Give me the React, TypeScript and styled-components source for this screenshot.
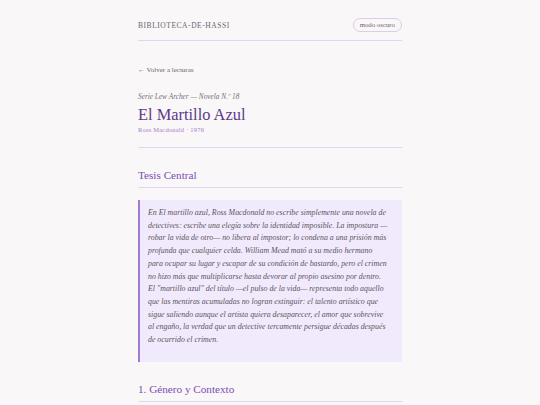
import styled, { createGlobalStyle } from "styled-components";

const GlobalStyle = createGlobalStyle`
  html, body {
    margin: 0;
    padding: 0;
    background: #f9f7f7;
  }
  body {
    font-family: "Liberation Serif", "DejaVu Serif", serif;
    color: #444;
  }
`;

const Page = styled.div`
  width: 264px;
  margin: 0 auto;
`;

const Header = styled.header`
  display: flex;
  justify-content: space-between;
  align-items: center;
  padding: 18px 0 8px;
  border-bottom: 1px solid #e3d5ef;
`;

const Brand = styled.div`
  font-size: 7.5px;
  letter-spacing: 0.55px;
  color: #6a6470;
`;

const ThemeButton = styled.button`
  font-family: inherit;
  font-size: 6.8px;
  color: #6a6470;
  background: transparent;
  border: 1px solid #dccbe9;
  border-radius: 8px;
  padding: 2px 6px;
  line-height: 8px;
  cursor: pointer;
`;

const BackLink = styled.a`
  display: block;
  margin-top: 25px;
  font-size: 7px;
  color: #6a6470;
  text-decoration: none;
`;

const TitleBlock = styled.div`
  margin-top: 18px;
  padding-bottom: 14px;
  border-bottom: 1px solid #e3d5ef;
`;

const Series = styled.div`
  font-size: 7.3px;
  font-style: italic;
  color: #77717c;
`;

const Title = styled.h1`
  margin: 3px 0 0;
  font-size: 16.4px;
  font-weight: normal;
  line-height: 22px;
  color: #5e3a8c;
`;

const Meta = styled.div`
  font-size: 6.5px;
  letter-spacing: 0.2px;
  color: #a67cc8;
`;

const SectionTitle = styled.h2<{ $top: number }>`
  margin: ${(p) => p.$top}px 0 0;
  padding-bottom: 4px;
  font-size: 11.2px;
  font-weight: normal;
  line-height: 15px;
  color: #7b4db5;
  border-bottom: 1px solid #e3d5ef;
`;

const Thesis = styled.blockquote`
  margin: 12px 0 0;
  padding: 7px 8px 15px 8px;
  background: #f1eafc;
  border-left: 2px solid #a27ad2;
  font-size: 7.85px;
  font-style: italic;
  line-height: 12.7px;
  white-space: nowrap;
  color: #5a5460;
`;

const thesisLines = [
  "En El martillo azul, Ross Macdonald no escribe simplemente una novela de",
  "detectives: escribe una elegía sobre la identidad imposible. La impostura —",
  "robar la vida de otro— no libera al impostor; lo condena a una prisión más",
  "profunda que cualquier celda. William Mead mató a su medio hermano",
  "para ocupar su lugar y escapar de su condición de bastardo, pero el crimen",
  "no hizo más que multiplicarse hasta devorar al propio asesino por dentro.",
  'El "martillo azul" del título —el pulso de la vida— representa todo aquello',
  "que las mentiras acumuladas no logran extinguir: el talento artístico que",
  "sigue saliendo aunque el artista quiera desaparecer, el amor que sobrevive",
  "al engaño, la verdad que un detective tercamente persigue décadas después",
  "de ocurrido el crimen.",
];

export default function App() {
  return (
    <>
      <GlobalStyle />
      <Page>
        <Header>
          <Brand>BIBLIOTECA-DE-HASSI</Brand>
          <ThemeButton>modo oscuro</ThemeButton>
        </Header>
        <BackLink href="#">← Volver a lecturas</BackLink>
        <TitleBlock>
          <Series>Serie Lew Archer — Novela N.º 18</Series>
          <Title>El Martillo Azul</Title>
          <Meta>Ross Macdonald · 1976</Meta>
        </TitleBlock>
        <SectionTitle $top={20}>Tesis Central</SectionTitle>
        <Thesis>
          {thesisLines.map((line, i) => (
            <span key={i}>
              {line}
              {i < thesisLines.length - 1 && <br />}
            </span>
          ))}
        </Thesis>
        <SectionTitle $top={20}>1. Género y Contexto</SectionTitle>
      </Page>
    </>
  );
}
